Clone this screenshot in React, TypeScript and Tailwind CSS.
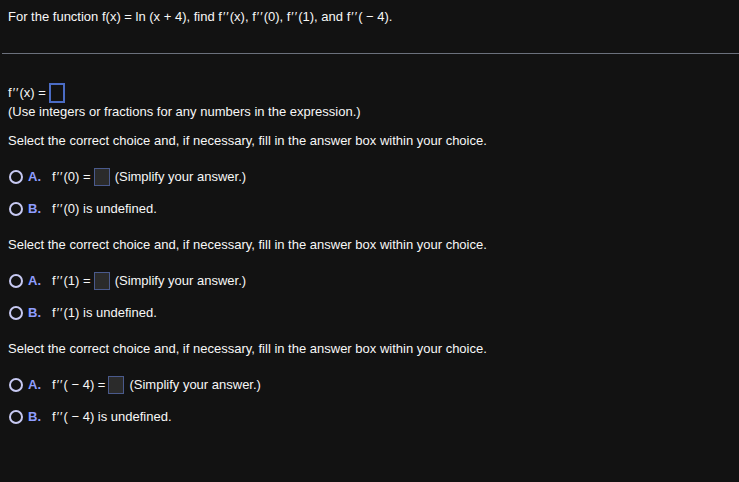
import React from "react";

const P = () => <span className="tracking-[1px] pl-[1px]">′′</span>;

const Box = () => (
  <span className="inline-block w-[16px] h-[18px] bg-[#2b2b2b] border border-[#4a5a8c] align-middle mx-[3px]" />
);

const Choice = ({ letter, children }: { letter: string; children: React.ReactNode }) => (
  <div className="flex items-center h-[20px]">
    <span className="w-[14px] h-[14px] rounded-full border-2 border-[#c7c9f2] ml-[9px]" />
    <span className="ml-[5px] w-[24px] font-bold text-[#8f9dff]">{letter}.</span>
    <span className="flex items-center">{children}</span>
  </div>
);

const Block = ({ arg }: { arg: string }) => (
  <div>
    <div className="pl-[8px] h-[20px] flex items-center">
      Select the correct choice and, if necessary, fill in the answer box within your choice.
    </div>
    <div className="mt-[16px] flex flex-col gap-[12px]">
      <Choice letter="A">
        <span>f<P />({arg}) =</span>
        <Box />
        <span className="ml-[2px]">(Simplify your answer.)</span>
      </Choice>
      <Choice letter="B">
        <span>f<P />({arg}) is undefined.</span>
      </Choice>
    </div>
  </div>
);

export default function App() {
  return (
    <div
      className="w-[739px] h-[482px] bg-[#121212] text-[#f7f7f7] text-[13px] leading-[16px] overflow-hidden"
      style={{ fontFamily: '"Liberation Sans", Arial, sans-serif' }}
    >
      <div className="pl-[8px] pt-[9px] h-[26px]">
        For the function f(x) = ln (x + 4), find f<P />(x), f<P />(0), f<P />(1), and f<P />( − 4).
      </div>
      <div className="mt-[27px] ml-[2px] h-[1px] bg-[#6b707c]" />
      <div className="mt-[29px] pl-[8px] flex items-center h-[20px]">
        <span>f<P />(x) =</span>
        <span className="inline-block w-[16px] h-[20px] border-2 border-[#4b6cc4] ml-[3px]" />
      </div>
      <div className="pl-[8px] h-[18px] flex items-center">
        (Use integers or fractions for any numbers in the expression.)
      </div>
      <div className="mt-[10px] flex flex-col gap-[16px]">
        <Block arg="0" />
        <Block arg="1" />
        <Block arg=" − 4" />
      </div>
    </div>
  );
}
